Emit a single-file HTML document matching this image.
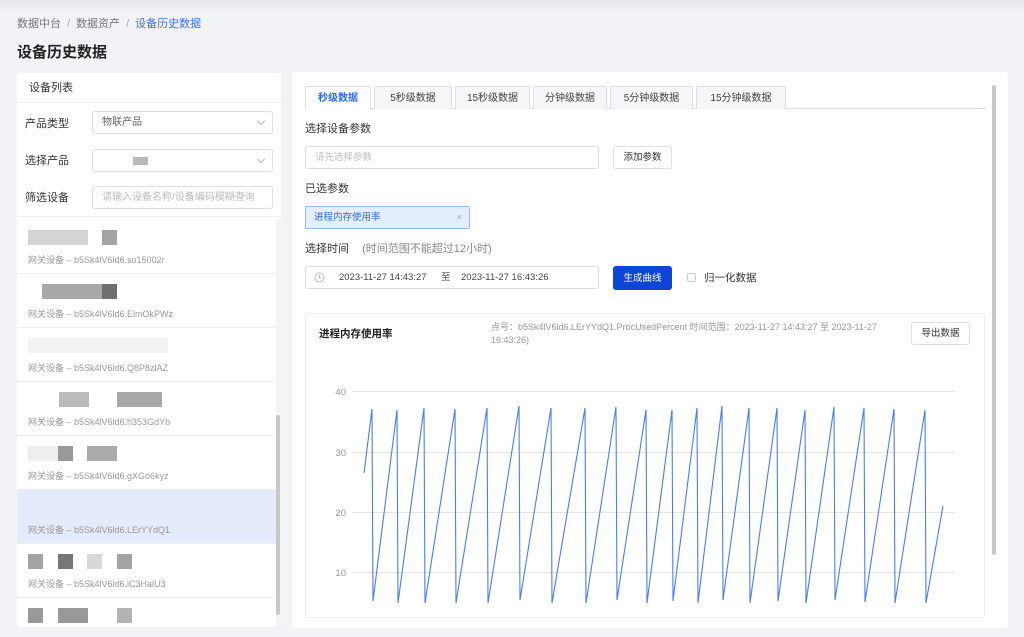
<!DOCTYPE html>
<html><head><meta charset="utf-8"><style>
*{box-sizing:border-box;margin:0;padding:0}
body{width:1024px;height:637px;overflow:hidden;background:#f2f3f7;font-family:"Liberation Sans","Noto Sans CJK SC",sans-serif;color:#333;position:relative}
.topg{position:absolute;left:0;top:0;width:1024px;height:14px;background:linear-gradient(#e6e7ee,#f2f3f7)}
.abs{position:absolute}
.bc{left:17px;top:15px;font-size:11px;color:#777}
.bc .s{color:#aaa;margin:0 6px}
.bc .cur{color:#3a72f0}
h1{position:absolute;left:17px;top:41px;font-size:15px;font-weight:bold;color:#222}
.lp{left:17px;top:73px;width:264px;height:554px;background:#fff;border-radius:3px;overflow:hidden}
.lp .hd{height:30px;line-height:30px;padding-left:12px;font-size:11px;border-bottom:1px solid #eee;color:#333}
.lbl{position:absolute;left:8px;font-size:11px;color:#333}
.inp{position:absolute;left:75px;width:181px;height:23px;border:1px solid #dcdfe6;border-radius:3px;font-size:10px;color:#666;line-height:21px;padding-left:9px;background:#fff}
.arr{position:absolute;right:8px;top:6px;width:6px;height:6px;border-right:1px solid #bbb;border-bottom:1px solid #bbb;transform:rotate(45deg)}
.list{position:absolute;left:0;top:147px;width:260px}
.it{height:54px;border-bottom:1px solid #eee;position:relative}
.it .c{position:absolute;left:11px;top:33px;font-size:9px;color:#999}
.bl{position:absolute;top:10px;height:15px;background:#c8c8c8}
.rp{left:292px;top:72px;width:716px;height:556px;background:#fff;border-radius:3px}
.tab{position:absolute;top:86px;height:23px;border:1px solid #dcdfe6;border-bottom:none;background:#f5f6f8;font-size:10px;color:#444;text-align:center;line-height:23px;border-radius:2px 2px 0 0}
.t{position:absolute;font-size:11px;color:#333}
.btn{position:absolute;border:1px solid #dcdfe6;border-radius:3px;font-size:9.5px;text-align:center;background:#fff;color:#333}
</style></head><body>
<div class="topg"></div>
<div class="abs bc">数据中台<span class="s">/</span>数据资产<span class="s">/</span><span class="cur">设备历史数据</span></div>
<h1>设备历史数据</h1>
<div class="abs lp">
 <div class="hd">设备列表</div>
 <div class="lbl" style="top:42px">产品类型</div>
 <div class="inp" style="top:38px">物联产品<div class="arr"></div></div>
 <div class="lbl" style="top:79px">选择产品</div>
 <div class="inp" style="top:76px"><div style="position:absolute;left:40px;top:7px;width:15px;height:8px;background:#bbb"></div><div class="arr"></div></div>
 <div class="lbl" style="top:116px">筛选设备</div>
 <div class="inp" style="top:113px;color:#bbb">请输入设备名称/设备编码模糊查询</div>
 <div style="position:absolute;left:0;top:143px;width:264px;height:1px;background:#eee"></div>
 <div class="list">
  <div class="it"><div class="bl" style="left:11px;width:60px;background:#d4d4d4"></div><div class="bl" style="left:85px;width:15px;background:#a4a4a4"></div><div class="c">网关设备 – b5Sk4lV6ld6.so15002r</div></div>
  <div class="it"><div class="bl" style="left:25px;width:75px;background:#a8a8a8"></div><div class="bl" style="left:85px;width:15px;background:#707070"></div><div class="c">网关设备 – b5Sk4lV6ld6.ElmOkPWz</div></div>
  <div class="it"><div class="bl" style="left:11px;width:140px;background:#f3f3f3"></div><div class="c">网关设备 – b5Sk4lV6ld6.Q8P8zlAZ</div></div>
  <div class="it"><div class="bl" style="left:42px;width:30px;background:#bbb"></div><div class="bl" style="left:100px;width:45px;background:#a8a8a8"></div><div class="c">网关设备 – b5Sk4lV6ld6.h353GdYb</div></div>
  <div class="it"><div class="bl" style="left:11px;width:30px;background:#eee"></div><div class="bl" style="left:41px;width:15px;background:#999"></div><div class="bl" style="left:70px;width:30px;background:#aaa"></div><div class="c">网关设备 – b5Sk4lV6ld6.gXGo6kyz</div></div>
  <div class="it" style="background:#e4ebfb"><div class="c">网关设备 – b5Sk4lV6ld6.LErYYdQ1</div></div>
  <div class="it"><div class="bl" style="left:11px;width:15px;background:#a4a4a4"></div><div class="bl" style="left:41px;width:15px;background:#777"></div><div class="bl" style="left:70px;width:15px;background:#d8d8d8"></div><div class="bl" style="left:100px;width:15px;background:#a4a4a4"></div><div class="c">网关设备 – b5Sk4lV6ld6.lC3HalU3</div></div>
  <div class="it"><div class="bl" style="left:11px;width:15px;background:#999"></div><div class="bl" style="left:41px;width:30px;background:#999"></div><div class="bl" style="left:100px;width:15px;background:#b4b4b4"></div></div>
 </div>
 <div style="position:absolute;left:259px;top:147px;width:5px;height:407px;background:#f4f4f4"></div>
 <div style="position:absolute;left:259px;top:342px;width:4px;height:200px;background:#c8c8c8;border-radius:2px"></div>
</div>
<div class="abs rp"></div>
<div class="abs" style="left:305px;top:108px;width:681px;height:1px;background:#dcdfe6"></div>
<div class="tab" style="left:305px;width:66px;background:#fff;color:#2b6cf0;font-weight:bold;height:24px">秒级数据</div>
<div class="tab" style="left:374px;width:78px">5秒级数据</div>
<div class="tab" style="left:455px;width:75px">15秒级数据</div>
<div class="tab" style="left:533px;width:74px">分钟级数据</div>
<div class="tab" style="left:610px;width:83px">5分钟级数据</div>
<div class="tab" style="left:696px;width:90px">15分钟级数据</div>
<div style="position:absolute;left:992px;top:85px;width:4px;height:470px;background:#c8c8c8;border-radius:2px"></div>
<div class="t" style="left:305px;top:120px">选择设备参数</div>
<div class="abs" style="left:305px;top:146px;width:294px;height:23px;border:1px solid #dcdfe6;border-radius:3px;font-size:9.5px;color:#c0c0c0;line-height:21px;padding-left:9px">请先选择参数</div>
<div class="btn" style="left:613px;top:146px;width:59px;height:23px;line-height:21px">添加参数</div>
<div class="t" style="left:305px;top:180px">已选参数</div>
<div class="abs" style="left:305px;top:206px;width:165px;height:23px;border:1px solid #9ab8f5;background:#e5eefd;border-radius:2px;font-size:9.5px;color:#2b6cf0;line-height:21px;padding-left:8px">进程内存使用率<span style="position:absolute;right:7px;color:#8aa8e8">×</span></div>
<div class="t" style="left:305px;top:240px">选择时间 <span style="color:#888;margin-left:10px">(时间范围不能超过12小时)</span></div>
<div class="abs" style="left:305px;top:266px;width:294px;height:23px;border:1px solid #dcdfe6;border-radius:3px;font-size:9.5px;color:#444;line-height:21px">
 <svg style="position:absolute;left:8px;top:5px" width="11" height="11"><circle cx="5.5" cy="5.5" r="4.5" fill="none" stroke="#bbb"/><path d="M5.5 3v3h2" fill="none" stroke="#bbb"/></svg>
 <span style="position:absolute;left:33px">2023-11-27 14:43:27</span><span style="position:absolute;left:135px">至</span><span style="position:absolute;left:155px">2023-11-27 16:43:26</span></div>
<div class="btn" style="left:613px;top:266px;width:59px;height:24px;line-height:24px;background:#0d45d6;border-color:#0d45d6;color:#fff">生成曲线</div>
<div class="abs" style="left:687px;top:273px;width:9px;height:9px;border:1px solid #ccc;border-radius:2px"></div>
<div class="t" style="left:704px;top:270px;font-size:10.5px">归一化数据</div>
<div class="abs" style="left:305px;top:313px;width:680px;height:305px;background:#fff;border:1px solid #eee;border-radius:3px"></div>
<div class="t" style="left:319px;top:326px;font-size:10.5px;font-weight:bold;color:#222">进程内存使用率</div>
<div class="abs" style="left:491px;top:321px;width:400px;font-size:9px;color:#999;line-height:13px">点号：b5Sk4lV6ld6.LErYYdQ1.ProcUsedPercent 时间范围：2023-11-27 14:43:27 至 2023-11-27 16:43:26)</div>
<div class="btn" style="left:911px;top:322px;width:59px;height:23px;line-height:21px">导出数据</div>
<svg class="abs" style="left:0;top:0" width="1024" height="637">
 <g stroke="#e6e6e6" stroke-width="1"><line x1="352" y1="391.5" x2="955" y2="391.5"/><line x1="352" y1="452.5" x2="955" y2="452.5"/><line x1="352" y1="512.5" x2="955" y2="512.5"/><line x1="352" y1="572.5" x2="955" y2="572.5"/></g>
 <g font-size="9.5" fill="#999" font-family="Liberation Sans" text-anchor="end"><text x="346" y="395">40</text><text x="346" y="456">30</text><text x="346" y="516">20</text><text x="346" y="576">10</text></g>
 <path fill="none" stroke="#4a7cf3" stroke-width="1.1" d="M364,473 L372,409 L373,601 L397,410 L398,603 L424,408 L425,603 L455,409 L456,603 L487,408 L488,603 L519,406 L520,600 L551,408 L552,603 L585,408 L586,603 L616,407 L617,600 L646,410 L647,603 L672,410 L673,601 L697,408 L698,603 L722,406 L723,600 L749,408 L750,603 L777,408 L778,601 L805,410 L806,603 L834,407 L835,600 L864,408 L865,602 L894,409 L895,603 L925,410 L926,603 L943,506"/>
</svg>
</body></html>
